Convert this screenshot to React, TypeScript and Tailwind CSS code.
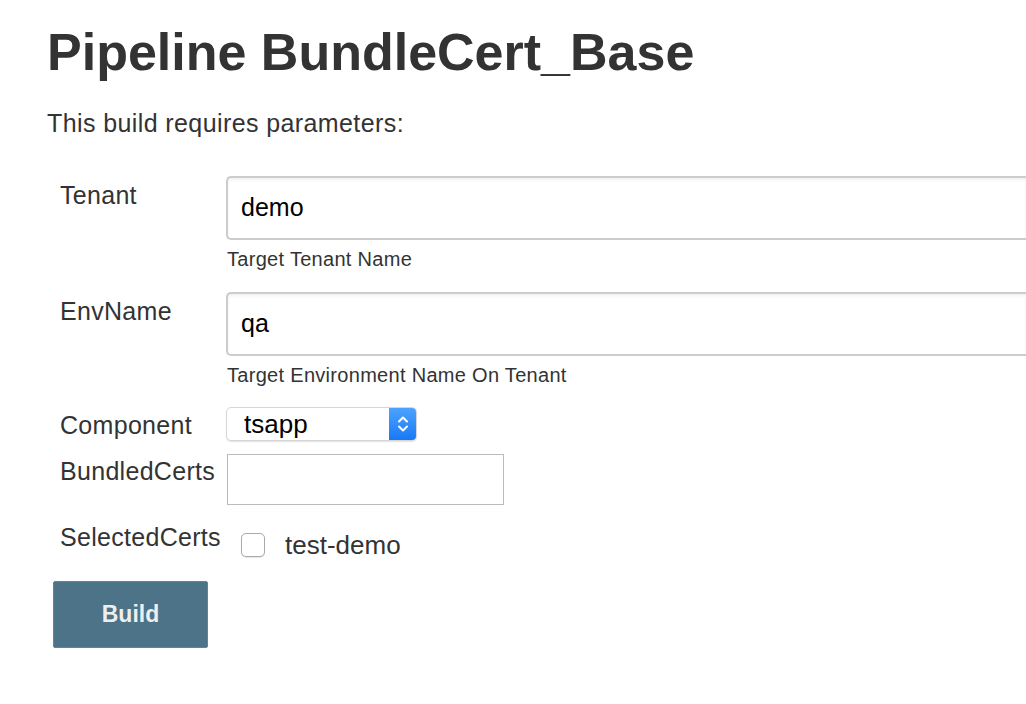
import React from 'react'

const Label = ({ text, offset }: { text: string; offset: string }) => (
  <div className={`w-[166px] shrink-0 text-[25px] leading-[30px] tracking-[0.3px] text-[#333] ${offset}`}>{text}</div>
)

const TextBox = ({ value }: { value: string }) => (
  <div className="h-[64px] border-2 border-r-0 border-[#ccc] rounded-l-[5px] shadow-[inset_0_2px_3px_rgba(0,0,0,0.06)] flex items-center pl-[13px] text-[25px] text-black">
    {value}
  </div>
)

const Help = ({ text }: { text: string }) => (
  <div className="mt-[7px] text-[20px] leading-6 tracking-[0.3px] pl-px text-[#333]">{text}</div>
)

export default function App() {
  return (
    <div className="w-[1026px] h-[704px] overflow-hidden bg-white font-['Liberation_Sans',Arial,sans-serif] text-[#333]">
      <div className="pl-[47px] pt-[22px]">
        <h1 className="text-[52px] font-bold leading-[60px]">Pipeline BundleCert_Base</h1>
        <p className="mt-[26px] text-[25px] leading-[30px] tracking-[0.4px]">This build requires parameters:</p>
      </div>

      <div className="pl-[60px] flex flex-col">
        {/* Tenant */}
        <div className="flex mt-[38px]">
          <Label text="Tenant" offset="mt-[4px]" />
          <div className="flex-1 min-w-0">
            <TextBox value="demo" />
            <Help text="Target Tenant Name" />
          </div>
        </div>

        {/* EnvName */}
        <div className="flex mt-[21px]">
          <Label text="EnvName" offset="mt-[4px]" />
          <div className="flex-1 min-w-0">
            <TextBox value="qa" />
            <Help text="Target Environment Name On Tenant" />
          </div>
        </div>

        {/* Component */}
        <div className="flex mt-[20px]">
          <Label text="Component" offset="mt-[3px]" />
          <div className="w-[191px] h-[34px] rounded-[5px] border border-[#d6d6d6] shadow-[0_1px_1px_rgba(0,0,0,0.12)] flex overflow-hidden">
            <div className="flex-1 flex items-center pl-[17px] text-[26px] text-black">tsapp</div>
            <div className="w-[27px] bg-gradient-to-b from-[#4ca2ff] to-[#1479f6] flex items-center justify-center">
              <svg width="12" height="20" viewBox="0 0 12 20" fill="none" stroke="white" strokeWidth="2" strokeLinecap="round" strokeLinejoin="round">
                <path d="M2 7.5 L6 3.5 L10 7.5" />
                <path d="M2 12.5 L6 16.5 L10 12.5" />
              </svg>
            </div>
          </div>
        </div>

        {/* BundledCerts */}
        <div className="flex mt-[13px]">
          <Label text="BundledCerts" offset="mt-[2px]" />
          <div className="w-[277px] h-[51px] border border-[#bbb] ml-px" />
        </div>

        {/* SelectedCerts */}
        <div className="flex mt-[17px]">
          <Label text="SelectedCerts" offset="" />
          <div className="flex items-start pl-[15px]">
            <div className="mt-[11px] w-[24px] h-[24px] rounded-[5px] border border-[#aaa] shadow-[0_1px_1px_rgba(0,0,0,0.1)] bg-white" />
            <span className="ml-[20px] mt-[8px] text-[26px] leading-[30px]">test-demo</span>
          </div>
        </div>
      </div>

      <div className="pl-[53px] mt-[21px]">
        <button className="w-[155px] h-[67px] bg-[#4d7389] border border-[#5a87a0] rounded-[2px] text-[23px] font-bold text-[#eee]">
          Build
        </button>
      </div>
    </div>
  )
}
